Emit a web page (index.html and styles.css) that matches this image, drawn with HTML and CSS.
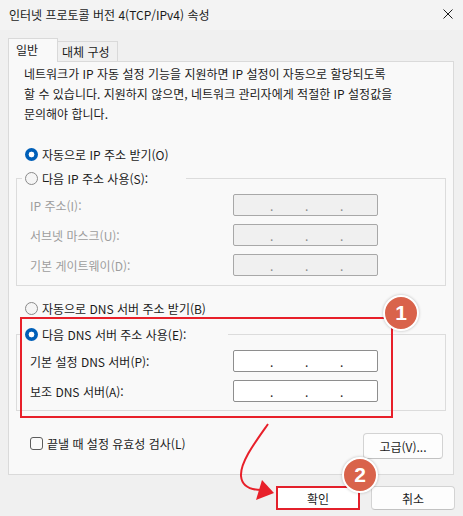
FILE: index.html
```html
<!DOCTYPE html>
<html lang="ko">
<head>
<meta charset="utf-8">
<title>인터넷 프로토콜 버전 4(TCP/IPv4) 속성</title>
<link rel="stylesheet" href="styles.css">
</head>
<body>
<div class="window">
  <div class="titlebar">
    <span class="title">인터넷 프로토콜 버전 4(TCP/IPv4) 속성</span>
    <svg class="close" width="10" height="10" viewBox="0 0 10 10"><path d="M0.5 0.5L9.5 9.5M9.5 0.5L0.5 9.5" stroke="#1b1b1b" stroke-width="1" fill="none"/></svg>
  </div>
  <div class="tabs">
    <div class="tab active">일반</div>
    <div class="tab">대체 구성</div>
  </div>
  <div class="panel">
    <p class="desc">네트워크가 IP 자동 설정 기능을 지원하면 IP 설정이 자동으로 할당되도록<br>할 수 있습니다. 지원하지 않으면, 네트워크 관리자에게 적절한 IP 설정값을<br>문의해야 합니다.</p>
    <div class="radio-row first"><span class="radio checked"></span>자동으로 IP 주소 받기(O)</div>
    <fieldset class="group disabled ip">
      <legend class="legend-ip"><span class="radio"></span>다음 IP 주소 사용(S):</legend>
      <div class="field"><span class="label">IP 주소(I):</span><span class="ipbox"><i>.</i><i>.</i><i>.</i></span></div>
      <div class="field"><span class="label">서브넷 마스크(U):</span><span class="ipbox"><i>.</i><i>.</i><i>.</i></span></div>
      <div class="field"><span class="label">기본 게이트웨이(D):</span><span class="ipbox"><i>.</i><i>.</i><i>.</i></span></div>
    </fieldset>
    <div class="radio-row dns-auto"><span class="radio"></span>자동으로 DNS 서버 주소 받기(B)</div>
    <fieldset class="group dns">
      <legend class="legend-dns"><span class="radio checked"></span>다음 DNS 서버 주소 사용(E):</legend>
      <div class="field"><span class="label">기본 설정 DNS 서버(P):</span><span class="ipbox"><i>.</i><i>.</i><i>.</i></span></div>
      <div class="field"><span class="label">보조 DNS 서버(A):</span><span class="ipbox"><i>.</i><i>.</i><i>.</i></span></div>
    </fieldset>
    <div class="bottom-row">
      <div class="check-row"><span class="checkbox"></span>끝낼 때 설정 유효성 검사(L)</div>
      <button class="btn advanced">고급(V)...</button>
    </div>
  </div>
  <div class="buttons">
    <button class="btn ok">확인</button>
    <button class="btn">취소</button>
  </div>

  <div class="redbox"></div>
  <svg class="arrow" width="463" height="516" viewBox="0 0 463 516">
    <path d="M268 424 C256 441 240 462 241 476 C242 487 252 490 262 490" stroke="#e8202a" stroke-width="2" fill="none"/>
    <polygon points="274,493 256,500 262,480" fill="#e8202a"/>
  </svg>
  <div class="badge b1">1</div>
  <div class="badge b2">2</div>
</div>
</body>
</html>
```
FILE: styles.css
```css
* { box-sizing: border-box; }
html, body { margin: 0; padding: 0; }
body {
  background: #f0f0f0;
  font-family: "Noto Sans CJK KR", "Noto Sans", sans-serif;
  font-size: 12px;
  color: #1b1b1b;
}
.window {
  position: relative;
  width: 463px;
  height: 516px;
  background: #f0f0f0;
  overflow: hidden;
}
.titlebar {
  height: 30px;
  background: #f3f3f3;
  display: flex;
  align-items: center;
  justify-content: space-between;
  padding: 0 10px 0 9px;
}
.title { line-height: 30px; }
.close { display: block; margin-top: -2px; }

.tabs {
  display: flex;
  align-items: flex-end;
  margin: 8px 0 0 8px;
  height: 23px;
}
.tab {
  height: 20px;
  line-height: 19px;
  border: 1px solid #d9d9d9;
  border-left: none;
  border-bottom: none;
  background: #f0f0f0;
  width: 60px;
  padding-left: 4px;
}
.tab.active {
  height: 23px;
  line-height: 21px;
  width: 50px;
  padding-left: 7px;
  border-left: 1px solid #d9d9d9;
  background: #f9f9f9;
  position: relative;
  z-index: 1;
  margin-bottom: -1px;
  height: 24px;
}
.panel {
  margin-left: 8px;
  width: 446px;
  background: #f9f9f9;
  border: 1px solid #dadada;
  padding: 2px 7px 15px 15px;
}
.desc {
  margin: 0;
  line-height: 20px;
  white-space: nowrap;
}
.radio-row {
  display: flex;
  align-items: center;
  height: 20px;
  margin-left: 1px;
}
.radio-row.first { margin-top: 20px; }
.radio-row.dns-auto { margin-top: 12px; }
.radio {
  width: 13px;
  height: 13px;
  border-radius: 50%;
  border: 1px solid #8a8a8a;
  background: #f5f5f5;
  margin-right: 4px;
  flex: none;
  display: inline-block;
}
.radio.checked {
  border: none;
  background: radial-gradient(circle, #ffffff 0 2.6px, #005fb8 3.2px);
}
.group {
  margin: 4px 0 0 -8px;
  width: 430px;
  border: 1px solid #dcdcdc;
  padding: 6px 0 9px 13px;
  min-width: 0;
}
.group.dns { margin-top: 6px; padding-bottom: 8px; }
.group legend {
  display: flex;
  align-items: center;
  height: 20px;
  margin-left: -8px;
  padding: 0 0 0 3px;
}
.legend-ip { width: 164px; }
.legend-dns { width: 206px; }
.field {
  display: flex;
  align-items: center;
  height: 22px;
}
.field + .field { margin-top: 8px; }
.label { width: 203px; }
.ipbox {
  width: 145px;
  height: 22px;
  border: 1px solid #8e8e8e;
  border-radius: 2px;
  background: #ffffff;
  display: flex;
  padding-left: 36px;
  padding-top: 4px;
  line-height: 14px;
}
.ipbox i {
  font-style: normal;
  width: 35px;
}
.disabled .label { color: #9d9d9d; }
.disabled .ipbox { background: #f0f0f0; color: #8a8a8a; border-color: #a8a8a8; }

.bottom-row {
  display: flex;
  justify-content: space-between;
  align-items: flex-start;
  margin-top: 22px;
  padding-right: 3px;
}
.check-row {
  display: flex;
  align-items: center;
  height: 20px;
  margin-left: 6px;
}
.checkbox {
  width: 13px;
  height: 13px;
  border: 1px solid #5c5c5c;
  border-radius: 3px;
  background: #fafafa;
  margin-right: 4px;
}
.btn {
  font-family: inherit;
  font-size: 12px;
  color: #1b1b1b;
  background: #fdfdfd;
  border: 1px solid #d3d3d3;
  border-bottom-color: #c2c2c2;
  border-radius: 4px;
  padding: 0;
  height: 24px;
  width: 84px;
}
.btn.advanced { width: 80px; height: 26px; }
.buttons {
  display: flex;
  justify-content: flex-end;
  gap: 11px;
  margin-top: 11px;
  padding-right: 8px;
}
.btn.ok {
  border: 2px solid #e3202b;
  border-radius: 0;
  background: #ffffff;
}

.redbox {
  position: absolute;
  left: 20px;
  top: 317px;
  width: 373px;
  height: 101px;
  border: 2px solid #e8202a;
  pointer-events: none;
}
.arrow {
  position: absolute;
  left: 0;
  top: 0;
  pointer-events: none;
}
.badge {
  position: absolute;
  width: 36px;
  height: 36px;
  border-radius: 50%;
  background: #d9634b;
  border: 2px solid #ffffff;
  box-shadow: 0 0 3px rgba(0,0,0,0.25);
  color: #ffffff;
  font-family: "Liberation Sans", Arial, sans-serif;
  font-weight: bold;
  font-size: 21px;
  display: flex;
  align-items: center;
  justify-content: center;
}
.b1 { left: 383px; top: 295px; }
.b2 { left: 342px; top: 457px; }
```
